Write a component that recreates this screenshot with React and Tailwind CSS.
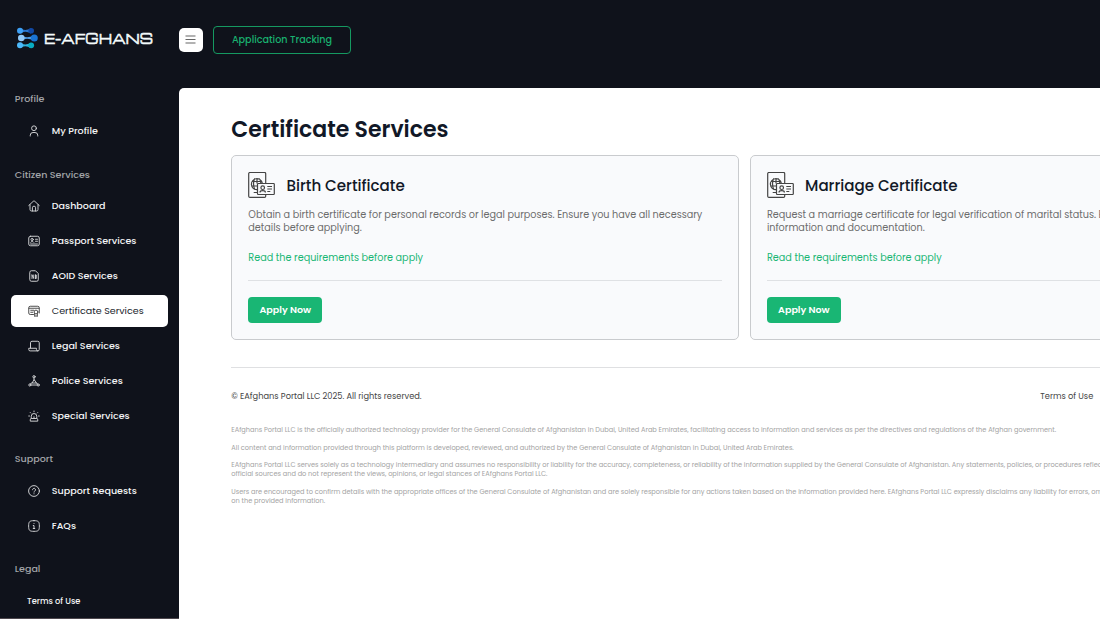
const stroke = {
  fill: "none",
  stroke: "currentColor",
  strokeLinecap: "round",
  strokeLinejoin: "round",
};

const icons = {
  user: (
    <>
      <circle cx="12" cy="6.5" r="4.8" />
      <path d="M4.500 22v-1.500a5.500 5.500 0 0 1 5.500-5.500h4a5.500 5.500 0 0 1 5.500 5.500V22" />
    </>
  ),
  home: (
    <>
      <path d="M1.500 11 10.500 2.600a2.200 2.200 0 0 1 3 0L22.500 11" />
      <path d="M4 9.500V19a3 3 0 0 0 3 3h10a3 3 0 0 0 3-3V9.500" />
      <path d="M8.800 22v-6.500a3.200 3.200 0 0 1 6.400 0V22" />
    </>
  ),
  passport: (
    <>
      <rect x="1.500" y="2.500" width="21" height="19" rx="3.500" />
      <circle cx="8.300" cy="9" r="2.300" />
      <path d="M5 14.500c1-2 5.600-2 6.600 0M15 8.500h4M15 12.500h4M5 18h14" />
    </>
  ),
  file: (
    <>
      <path d="M3.500 4.500a3 3 0 0 1 3-3H15l5.500 5.500v12.500a3 3 0 0 1-3 3h-11a3 3 0 0 1-3-3z" />
      <path d="M8 10v7M8 10l3.500 7V10M15 10v7M15 10h1.500v7H15" />
    </>
  ),
  certificate: (
    <>
      <path d="M11 19H4.500a3 3 0 0 1-3-3V5.500a3 3 0 0 1 3-3h15a3 3 0 0 1 3 3V16" />
      <path d="M2 6.500h20M5.500 10.500h6M5.500 14.500h4" />
      <circle cx="16" cy="14" r="3.800" />
      <path d="M13.300 17v6l2.700-1.500 2.700 1.500v-6" />
    </>
  ),
  scroll: (
    <path d="M5 16V5.500a3 3 0 0 1 3-3h11.500a3 3 0 0 1 3 3V19a2.800 2.800 0 0 1-5.600 0v-2.500H1.500V19a2.800 2.800 0 0 0 2.800 2.800h15.200" />
  ),
  network: (
    <>
      <circle cx="12" cy="3.500" r="2.300" />
      <path d="M12 6v4.500M12 10l-4 6h8zM7.500 16l-3 2M16.500 16l3 2M6.200 20h11.600" />
      <circle cx="3.600" cy="20" r="2.100" />
      <circle cx="20.400" cy="20" r="2.100" />
    </>
  ),
  siren: (
    <>
      <path d="M6.500 17v-4.500a5.500 5.500 0 0 1 11 0V17M4.500 21.500v-2a2.500 2.500 0 0 1 2.500-2.500h10a2.500 2.500 0 0 1 2.500 2.500v2zM12 17v-3.500" />
      <path d="M12 2v1.500M4.500 5l1 1M19.500 5l-1 1M1.500 12H3M21 12h1.500" />
    </>
  ),
  help: (
    <>
      <circle cx="12" cy="12" r="10.800" />
      <path d="M9 9.500a3 3 0 1 1 4.500 2.600c-.9.500-1.500 1.200-1.500 2.200M12 17.500v.2" />
    </>
  ),
  info: (
    <>
      <path d="M12 1.300c9 0 10.700 1.700 10.700 10.700S21 22.700 12 22.700 1.300 21 1.300 12 3 1.300 12 1.300z" />
      <path d="M10.500 11h1.500v6M10.500 17h3M12 7v.2" />
    </>
  ),
};

function Logo() {
  return (
    <svg className="h-7 w-[140px] overflow-visible" viewBox="0 0 140 28" role="img">
      <path d="M4 2.200Q9 5.600 15 2.200V7.400Q9 4 4 7.400Z" fill="#2a76cf" />
      <path d="M5 9.200Q11 13.400 18 9V15Q11 10.600 5 14.800Z" fill="#4f9be4" />
      <path d="M4 16.700Q9 20.100 15 16.700V21.900Q9 18.500 4 21.900Z" fill="#2fb2dd" />
      <circle cx="4" cy="4.800" r="3" fill="#3ea0f5" />
      <circle cx="15.200" cy="4.800" r="2.800" fill="#1148a4" />
      <circle cx="5.300" cy="12" r="3.300" fill="#92c9f8" />
      <circle cx="18.300" cy="12" r="3.500" fill="#1a74d4" />
      <circle cx="4" cy="19.300" r="3" fill="#4cb8fa" />
      <circle cx="15.200" cy="19.300" r="2.900" fill="#08acc2" />
      <text
        x="28"
        y="17.600"
        textLength="109"
        lengthAdjust="spacingAndGlyphs"
        fill="#f4fbfc"
        stroke="#f4fbfc"
        strokeWidth="0.600"
        className="font-['Michroma','Montserrat','Inter',sans-serif] text-[14.500px]"
      >
        E-AFGHANS
      </text>
    </svg>
  );
}

function NavItem({ icon, label, active }) {
  return (
    <a
      className={
        active
          ? "flex h-[31.4px] items-center gap-[12px] rounded-[5px] bg-white pl-[17.3px] font-normal text-[#20242c]"
          : "flex h-[31.4px] items-center gap-[12px] rounded-[5px] pl-[17.3px] text-[#f4f5f6]"
      }
    >
      <svg className={active ? "size-[12px] text-[#444]" : "size-[12px] text-[#d4d5d7]"} viewBox="0 0 24 24" {...stroke} strokeWidth={1.9}>
        {icons[icon]}
      </svg>
      <span>{label}</span>
    </a>
  );
}

function NavGroup({ title, children }) {
  return (
    <section className="flex flex-col">
      <h2 className="mb-[6.2px] pl-[4.3px] leading-5 text-[#a3a5a9]">{title}</h2>
      <div className="flex flex-col gap-[3.5px]">{children}</div>
    </section>
  );
}

function CertificateIcon() {
  return (
    <svg className="h-[26px] w-[27px]" viewBox="0 0 27 26" fill="none" stroke="#444" strokeWidth="1.200">
      <path d="M17.700 11V1.700a1.200 1.200 0 0 0-1.200-1.200H1.900A1.200 1.200 0 0 0 .7 1.700v22.600A1.200 1.200 0 0 0 1.900 25.400h14.600a1.200 1.200 0 0 0 1.200-1.200v-1.700" />
      <path d="M14.300 11a5.500 5.500 0 1 0-5.300 6.700M9 6v5.500M6.800 17.200c-1.700-3-1.700-7.900 0-10.800M11.300 6.500c.9 1.300 1.400 2.900 1.500 4.500M4 9.500h10M3.700 14h5.300M5.700 20.500h3.300" />
      <rect x="9.500" y="11.500" width="16.800" height="11" rx="0.800" />
      <path d="M12 20.500c0-2.400 5.400-2.400 5.400 0M19.300 14.500h4.700M19.300 17h4.700M19.300 19.500h3" />
      <circle cx="14.700" cy="15.700" r="1.800" />
    </svg>
  );
}

function ServiceCard({ title, lines }) {
  return (
    <article className="h-[185px] w-[507.600px] shrink-0 rounded-[5px] border border-[#c9cbce] bg-[#f9fafc] px-4 pt-4">
      <div className="flex h-[27px] items-start gap-[11.200px]">
        <CertificateIcon />
        <h2 className="text-[15.100px] leading-[27px] font-medium text-[#111827]">{title}</h2>
      </div>
      <div className="mt-[8.500px] whitespace-nowrap text-[9.660px] leading-[13px] text-[#6c6c6c]">
        {lines.map((line) => (
          <p key={line}>{line}</p>
        ))}
      </div>
      <p className="mt-[17.500px] text-[9.660px] leading-[13px] text-[#19b674]">Read the requirements before apply</p>
      <hr className="mt-4 border-[#dfe1e4]" />
      <button className="mt-4 h-[26px] w-[74px] rounded-[4px] bg-[#19b674] text-[9.540px] font-semibold text-white">
        Apply Now
      </button>
    </article>
  );
}

const notices = [
  [
    "EAfghans Portal LLC is the officially authorized technology provider for the General Consulate of Afghanistan in Dubai, United Arab Emirates, facilitating access to information and services as per the directives and regulations of the Afghan government.",
  ],
  [
    "All content and information provided through this platform is developed, reviewed, and authorized by the General Consulate of Afghanistan in Dubai, United Arab Emirates.",
  ],
  [
    "EAfghans Portal LLC serves solely as a technology intermediary and assumes no responsibility or liability for the accuracy, completeness, or reliability of the information supplied by the General Consulate of Afghanistan. Any statements, policies, or procedures reflect",
    "official sources and do not represent the views, opinions, or legal stances of EAfghans Portal LLC.",
  ],
  [
    "Users are encouraged to confirm details with the appropriate offices of the General Consulate of Afghanistan and are solely responsible for any actions taken based on the information provided here. EAfghans Portal LLC expressly disclaims any liability for errors, omissions",
    "on the provided information.",
  ],
];

export default function App() {
  return (
    <div className="flex h-[619px] w-[1100px] flex-col overflow-hidden bg-[#0f121b] font-['Poppins','Inter',sans-serif]">
      <header className="flex h-[88px] shrink-0 items-start pt-[26px] pl-4">
        <Logo />
        <button className="mt-[2px] ml-[23px] flex size-[23.500px] items-center justify-center rounded-[5px] bg-white">
          <svg className="h-[9px] w-[11px]" viewBox="0 0 11 9" stroke="#666" strokeWidth="1.100">
            <path d="M.5 1h10M.5 4.500h10M.5 8h10" />
          </svg>
        </button>
        <button className="ml-[10.500px] h-7 w-[138px] rounded-[4px] border border-[#159961] pt-px text-[9.640px] font-medium text-[#19b06f]">
          Application Tracking
        </button>
      </header>

      <div className="flex min-h-0 flex-1">
        <nav className="flex w-[179px] shrink-0 flex-col gap-[17.600px] overflow-hidden border-b border-[#4d474d] pt-[1.400px] pr-[11px] pl-[10.500px] text-[9.560px] font-medium">
          <NavGroup title="Profile">
            <NavItem icon="user" label="My Profile" />
          </NavGroup>
          <NavGroup title="Citizen Services">
            <NavItem icon="home" label="Dashboard" />
            <NavItem icon="passport" label="Passport Services" />
            <NavItem icon="file" label="AOID Services" />
            <NavItem icon="certificate" label="Certificate Services" active />
            <NavItem icon="scroll" label="Legal Services" />
            <NavItem icon="network" label="Police Services" />
            <NavItem icon="siren" label="Special Services" />
          </NavGroup>
          <NavGroup title="Support">
            <NavItem icon="help" label="Support Requests" />
            <NavItem icon="info" label="FAQs" />
          </NavGroup>
          <NavGroup title="Legal">
            <a className="flex h-[31.400px] items-center pl-[16.500px] text-[8.280px] text-[#f4f5f6]">Terms of Use</a>
          </NavGroup>
        </nav>

        <main className="min-w-0 flex-1 overflow-hidden rounded-tl-[5px] bg-white pt-[25px] pl-[52.300px]">
          <h1 className="text-[22px] leading-[33px] font-semibold text-[#111827]">Certificate Services</h1>
          <div className="mt-[9px] flex gap-[11px]">
            <ServiceCard
              title="Birth Certificate"
              lines={[
                "Obtain a birth certificate for personal records or legal purposes. Ensure you have all necessary",
                "details before applying.",
              ]}
            />
            <ServiceCard
              title="Marriage Certificate"
              lines={[
                "Request a marriage certificate for legal verification of marital status. Ensure you provide all",
                "information and documentation.",
              ]}
            />
          </div>
          <footer className="mt-[27px] w-[1026px] border-t border-[#dfe0e2]">
            <div className="flex h-[57px] w-[862px] items-center justify-between text-[8.270px] text-[#444]">
              <p>© EAfghans Portal LLC 2025. All rights reserved.</p>
              <a>Terms of Use</a>
            </div>
            <div className="flex flex-col gap-[8.500px] text-[6.620px] leading-[9px] whitespace-nowrap text-[#a3a3a3]">
              {notices.map((lines) => (
                <div key={lines[0]}>
                  {lines.map((line) => (
                    <p key={line}>{line}</p>
                  ))}
                </div>
              ))}
            </div>
          </footer>
        </main>
      </div>
    </div>
  );
}
